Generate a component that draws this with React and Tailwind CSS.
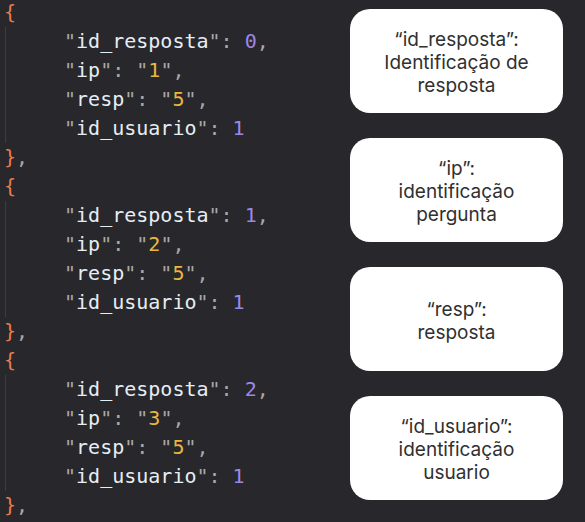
import React from 'react';

const objects = [
  { id: 0, ip: '1', resp: '5', usuario: 1 },
  { id: 1, ip: '2', resp: '5', usuario: 1 },
  { id: 2, ip: '3', resp: '5', usuario: 1 },
];

const notes = [
  ['“id_resposta”:', 'Identificação de', 'resposta'],
  ['“ip”:', 'identificação', 'pergunta'],
  ['“resp”:', 'resposta'],
  ['“id_usuario”:', 'identificação', 'usuario'],
];

function Key({ name }) {
  return (
    <>
      <span className="text-[#a8a8a8]">"</span>
      <span className="text-[#e6eef4]">{name}</span>
      <span className="text-[#a8a8a8]">":</span>{' '}
    </>
  );
}

function Str({ v }) {
  return (
    <>
      <span className="text-[#a8a8a8]">"</span>
      <span className="text-[#e8b83e]">{v}</span>
      <span className="text-[#a8a8a8]">"</span>
    </>
  );
}

const Comma = () => <span className="text-[#a8a8a8]">,</span>;

function JsonBlock({ obj }) {
  return (
    <div>
      <div className="pl-[4px] text-[#ec7c4b]">{'{'}</div>
      <div className="ml-[5px] border-l border-[#3d3c40] pl-[58px]">
        <div><Key name="id_resposta" /><span className="text-[#9b88e6]">{obj.id}</span><Comma /></div>
        <div><Key name="ip" /><Str v={obj.ip} /><Comma /></div>
        <div><Key name="resp" /><Str v={obj.resp} /><Comma /></div>
        <div><Key name="id_usuario" /><span className="text-[#9b88e6]">{obj.usuario}</span></div>
      </div>
      <div className="pl-[4px]"><span className="text-[#ec7c4b]">{'}'}</span><Comma /></div>
    </div>
  );
}

export default function App() {
  return (
    <div className="w-[585px] h-[522px] overflow-hidden bg-[#28272b] flex">
      <div
        className="w-[350px] -mt-[2px] text-[20px] leading-[29px] whitespace-pre"
        style={{ fontFamily: '"DejaVu Sans Mono", monospace' }}
      >
        {objects.map((o) => (
          <JsonBlock key={o.id} obj={o} />
        ))}
      </div>
      <div className="flex flex-col gap-[25px] pt-[9px]">
        {notes.map((lines, i) => (
          <div
            key={i}
            className="w-[213px] h-[104px] bg-white rounded-[20px] flex flex-col items-center justify-center pt-[3px] text-[19px] leading-[23px] text-[#303030] text-center"
            style={{ fontFamily: 'Inter, sans-serif' }}
          >
            {lines.map((l) => (
              <div key={l}>{l}</div>
            ))}
          </div>
        ))}
      </div>
    </div>
  );
}
